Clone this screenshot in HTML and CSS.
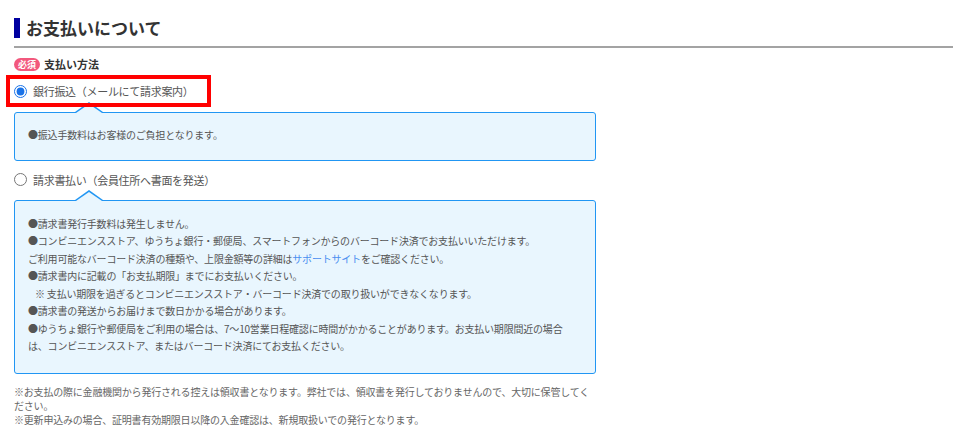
FILE: index.html
```html
<!DOCTYPE html>
<html lang="ja">
<head>
    <meta charset="UTF-8">
    <meta name="viewport" content="width=device-width, initial-scale=1.0">
    <title>お支払いについて</title>
    <link rel="stylesheet" href="styles.css">
</head>
<body>
    <section class="payment">
        <div class="title-wrap">
            <h2 class="title">お支払いについて</h2>
        </div>

        <div class="field-label">
            <span class="badge">必須</span>
            <span>支払い方法</span>
        </div>

        <div class="choices">
            <label class="choice highlight">
                <input type="radio" name="payment" value="bank" checked>
                <span>銀行振込（メールにて請求案内）</span>
            </label>
            <div class="info">
                <p>●振込手数料はお客様のご負担となります。</p>
            </div>

            <label class="choice">
                <input type="radio" name="payment" value="invoice">
                <span>請求書払い（会員住所へ書面を発送）</span>
            </label>
            <div class="info info-large">
                <p>●請求書発行手数料は発生しません。</p>
                <p>●コンビニエンスストア、ゆうちょ銀行・郵便局、スマートフォンからのバーコード決済でお支払いいただけます。<br>ご利用可能なバーコード決済の種類や、上限金額等の詳細は<a href="#">サポートサイト</a>をご確認ください。</p>
                <p>●請求書内に記載の「お支払期限」までにお支払いください。</p>
                <p class="indent">※ 支払い期限を過ぎるとコンビニエンスストア・バーコード決済での取り扱いができなくなります。</p>
                <p>●請求書の発送からお届けまで数日かかる場合があります。</p>
                <p>●ゆうちょ銀行や郵便局をご利用の場合は、7～10営業日程確認に時間がかかることがあります。お支払い期限間近の場合は、コンビニエンスストア、またはバーコード決済にてお支払ください。</p>
            </div>
        </div>

        <div class="notes">
            <p>※お支払の際に金融機関から発行される控えは領収書となります。弊社では、領収書を発行しておりませんので、大切に保管してください。</p>
            <p>※更新申込みの場合、証明書有効期限日以降の入金確認は、新規取扱いでの発行となります。</p>
        </div>
    </section>
</body>
</html>
```

FILE: styles.css
```css
body {
    font-family: "Noto Sans CJK JP", "Noto Sans", sans-serif;
    color: #333;
    margin: 0;
    padding: 0;
    background: #fff;
}
p {
    margin: 0;
}
.payment {
    padding: 18px 7px 0 14px;
}
.title-wrap {
    border-bottom: 2px solid #a3a3a3;
    padding-bottom: 8px;
}
.title {
    margin: 0;
    border-left: 6px solid #0000a0;
    padding-left: 6px;
    font-size: 17px;
    line-height: 20px;
    font-weight: bold;
    color: #333;
}
.field-label {
    display: flex;
    align-items: center;
    gap: 4px;
    margin-top: 9px;
    height: 14px;
    font-size: 11px;
    font-weight: bold;
}
.badge {
    background: #f2587d;
    color: #fff;
    font-size: 9px;
    line-height: 13px;
    padding: 0 4px;
    border-radius: 7px;
}
.choices {
    width: 582px;
}
.choice {
    display: flex;
    align-items: center;
    gap: 6px;
    height: 18px;
    margin-top: 10px;
    font-size: 11px;
    letter-spacing: -0.3px;
    color: #555;
}
.choice input {
    margin: 0;
    width: 13px;
    height: 13px;
    accent-color: #1a73e8;
}
.highlight {
    position: relative;
    z-index: 1;
    display: inline-flex;
    margin: 4px 0 0 -8px;
    padding: 3px 13px 3px 4px;
    border: 4px solid #ff0000;
}
.info {
    position: relative;
    margin-top: 5px;
    background: #e9f6fe;
    border: 1px solid #2196f3;
    border-radius: 3px;
    padding: 13px 13px 16px;
    font-size: 10px;
    line-height: 17.5px;
    letter-spacing: -0.2px;
    color: #555;
}
.info::before,
.info::after {
    content: "";
    position: absolute;
    left: 60px;
    border-style: solid;
    border-color: transparent;
}
.info::before {
    top: -11px;
    border-width: 0 14px 10px;
    border-bottom-color: #2196f3;
}
.info::after {
    top: -9px;
    left: 61px;
    border-width: 0 13px 9px;
    border-bottom-color: #e9f6fe;
}
.info-large {
    margin-top: 11px;
    padding: 14px 13px 18px;
}
.info a {
    color: #4a8ef0;
    text-decoration: none;
}
.indent {
    padding-left: 7px;
}
.notes {
    width: 582px;
    margin-top: 11px;
    font-size: 10px;
    line-height: 14px;
    letter-spacing: -0.2px;
    color: #666;
}
```
